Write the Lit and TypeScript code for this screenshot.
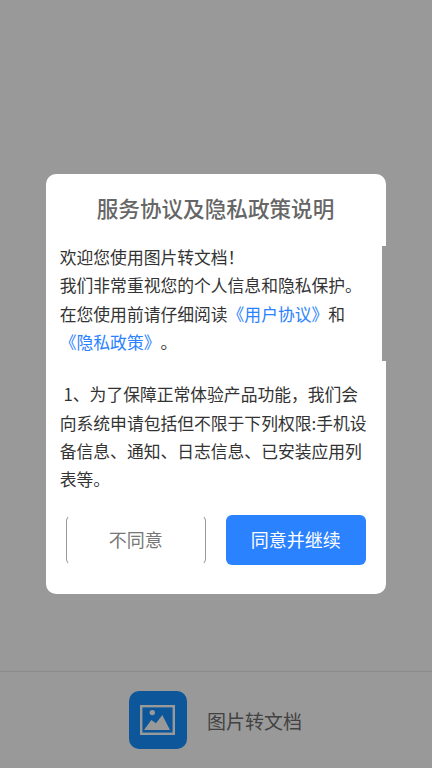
import { LitElement, html, css } from "lit";
import { customElement } from "lit/decorators.js";

@customElement("app-root")
export class AppRoot extends LitElement {
  static styles = css`
    :host {
      display: flex;
      flex-direction: column;
      position: relative;
      width: 432px;
      height: 768px;
      overflow: hidden;
      background: #fff;
      font-family: "Noto Sans CJK SC", "Noto Sans", sans-serif;
    }
    .page { flex: 1; }
    .brand {
      height: 97px;
      box-sizing: border-box;
      border-top: 1px solid #e8e8e8;
      display: flex;
      align-items: center;
      justify-content: center;
      gap: 20px;
      padding-right: 1px;
    }
    .logo {
      width: 58px;
      height: 58px;
      border-radius: 10px;
      background: #1490ff;
      display: flex;
      align-items: center;
      justify-content: center;
    }
    .brand-name { font-size: 19px; color: #6f6f6f; }
    .scrim {
      position: absolute;
      inset: 0;
      background: rgba(0, 0, 0, 0.4);
      display: flex;
      align-items: center;
      justify-content: center;
    }
    .card {
      position: relative;
      width: 340.5px;
      height: 420px;
      box-sizing: border-box;
      background: #fff;
      border-radius: 10px;
      display: flex;
      flex-direction: column;
      padding: 18px 15px 29px 14px;
    }
    .title {
      margin: 0;
      text-align: center;
      font-size: 21.6px;
      font-weight: 500;
      line-height: 32px;
      color: #666;
    }
    .body {
      height: 245px;
      overflow: hidden;
      margin-top: 19px;
      font-size: 16.8px;
      line-height: 28.4px;
      color: #333;
      text-spacing-trim: space-all;
    }
    .body p {
      margin: 0;
      white-space: pre-wrap;
      word-break: break-all;
    }
    .body p + p { margin-top: 23.6px; }
    .body a { color: #2a82ff; text-decoration: none; }
    .scrollbar {
      position: absolute;
      right: 0;
      top: 72px;
      width: 4.6px;
      height: 115px;
      background: #999;
    }
    .actions {
      display: flex;
      gap: 20px;
      padding-left: 6px;
      margin-top: auto;
    }
    .btn {
      width: 140px;
      height: 50px;
      box-sizing: border-box;
      border-radius: 6px;
      font: inherit;
      font-size: 18px;
      display: flex;
      align-items: center;
      justify-content: center;
      padding: 0 0 2px;
    }
    .ghost {
      background: #fff;
      color: #777;
      border: 1px solid #fff;
      border-left-color: #999;
      border-right-color: #999;
    }
    .primary {
      background: #2a82ff;
      color: #fff;
      border: none;
    }
  `;

  render() {
    return html`
      <div class="page"></div>
      <div class="brand">
        <div class="logo">
          <svg width="35" height="30" viewBox="0 0 35 30">
            <rect x="1.2" y="1.2" width="32.6" height="27.6" fill="none" stroke="#fff" stroke-width="2.4"/>
            <circle cx="12.3" cy="7.6" r="2.7" fill="#fff"/>
            <path d="M4 25 L11.3 15 L16 18.3 L22.3 10 L30 25 Z" fill="#fff"/>
          </svg>
        </div>
        <div class="brand-name">图片转文档</div>
      </div>
      <div class="scrim">
        <div class="card">
          <h1 class="title">服务协议及隐私政策说明</h1>
          <div class="body">
            <p>欢迎您使用图片转文档！
我们非常重视您的个人信息和隐私保护。
在您使用前请仔细阅读<a>《用户协议》</a>和
<a>《隐私政策》</a>。</p>
            <p> 1、为了保障正常体验产品功能，我们会向系统申请包括但不限于下列权限:手机设备信息、通知、日志信息、已安装应用列表等。</p>
          </div>
          <div class="scrollbar"></div>
          <div class="actions">
            <button class="btn ghost">不同意</button>
            <button class="btn primary">同意并继续</button>
          </div>
        </div>
      </div>
    `;
  }
}
